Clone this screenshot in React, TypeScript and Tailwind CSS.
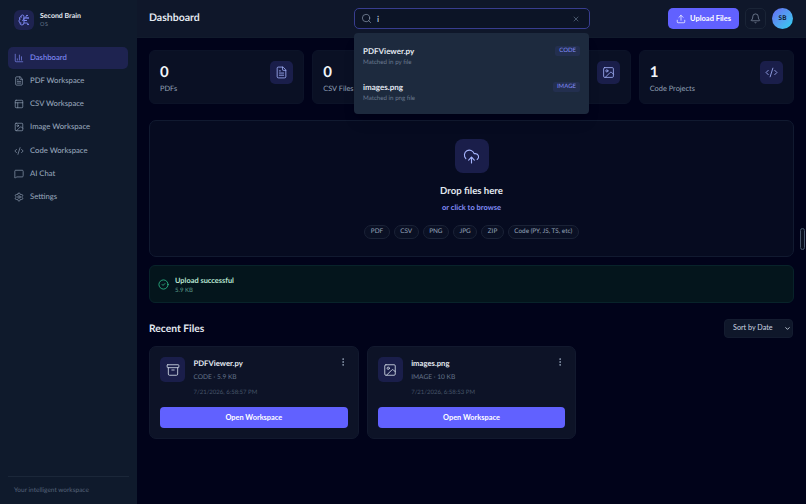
import React from "react";
import { ChartColumn, FileText, PanelsTopLeft, Image, CodeXml, MessageSquare, Settings, Search, X, Upload, Bell, CloudUpload, Archive, EllipsisVertical, CircleCheck, BrainCircuit, ChevronDown } from "lucide-react";

const nav = [
  { label: "Dashboard", Icon: ChartColumn, active: true },
  { label: "PDF Workspace", Icon: FileText },
  { label: "CSV Workspace", Icon: PanelsTopLeft },
  { label: "Image Workspace", Icon: Image },
  { label: "Code Workspace", Icon: CodeXml },
  { label: "AI Chat", Icon: MessageSquare },
  { label: "Settings", Icon: Settings },
];

const stats = [
  { n: "0", label: "PDFs", Icon: FileText },
  { n: "0", label: "CSV Files", Icon: PanelsTopLeft },
  { n: "1", label: "Images", Icon: Image },
  { n: "1", label: "Code Projects", Icon: CodeXml },
];

const chips = ["PDF", "CSV", "PNG", "JPG", "ZIP", "Code (PY, JS, TS, etc)"];

const files = [
  { name: "PDFViewer.py", meta: "CODE · 5.9 KB", date: "7/21/2026, 6:58:57 PM", Icon: Archive },
  { name: "images.png", meta: "IMAGE · 10 KB", date: "7/21/2026, 6:58:53 PM", Icon: Image },
];

const results = [
  { name: "PDFViewer.py", sub: "Matched in py file", tag: "CODE" },
  { name: "images.png", sub: "Matched in png file", tag: "IMAGE" },
];

export default function App() {
  return (
    <div className="relative flex h-[504px] w-[806px] overflow-hidden bg-[#01031a] text-white font-['Lato','Roboto',sans-serif] [text-rendering:geometricPrecision]">
      <aside className="flex w-[137px] shrink-0 flex-col bg-[#0f1a2c]">
        <div className="flex h-[38px] items-center gap-[6px] px-[14px] pt-[2px]">
          <div className="flex h-[20px] w-[20px] items-center justify-center rounded-[6px] bg-[#1e2350]">
            <BrainCircuit size={12} strokeWidth={1.8} className="text-[#818cf8]" />
          </div>
          <div className="flex flex-col">
            <span className="text-[7px] leading-[10px] font-bold text-[#e2e8f0]">Second Brain</span>
            <span className="text-[5.5px] leading-[9px] tracking-[0.5px] text-[#64748b]">OS</span>
          </div>
        </div>
        <nav className="mt-[8.5px] flex flex-col gap-[1.25px] pl-[8px] pr-[9px]">
          {nav.map(({ label, Icon, active }) => (
            <div key={label} className={`flex h-[22px] items-center gap-[6px] rounded-[5px] px-[6px] text-[7.7px] font-medium ${active ? "bg-[#1e2350] text-[#818cf8]" : "text-[#94a3b8]"}`}>
              <Icon size={10} strokeWidth={1.6} className="shrink-0" />
              <span>{label}</span>
            </div>
          ))}
        </nav>
        <div className="mx-[8px] mt-auto flex h-[28px] items-center border-t border-[#1b2739] px-[6px] text-[6.5px] text-[#566379]">
          Your intelligent workspace
        </div>
      </aside>

      <div className="flex min-w-0 flex-1 flex-col">
        <header className="flex h-[38px] shrink-0 items-center border-b border-[#111b2c] bg-[#0f172a] pl-[12px] pr-[13px]">
          <h1 className="w-[205px] pt-[1px] text-[10.5px] font-bold text-[#e2e8f0]">Dashboard</h1>
          <div className="flex h-[21px] w-[236px] items-center rounded-[5px] border border-[#383d8f] bg-[#0c1426] pl-[6px] pr-[9px]">
            <Search size={11} strokeWidth={1.4} className="text-[#94a3b8]" />
            <span className="ml-[5px] flex-1 pt-[1px] text-[8.5px] font-medium text-[#cbd5e1]">i</span>
            <X size={8} strokeWidth={2} className="text-[#64748b]" />
          </div>
          <div className="ml-auto flex items-center gap-[6px]">
            <button className="flex h-[21px] w-[71px] items-center justify-center gap-[4px] rounded-[5px] bg-[#6161ff] text-[7.5px] font-bold text-white">
              <Upload size={10} strokeWidth={1.7} />
              Upload Files
            </button>
            <div className="flex h-[21px] w-[21px] items-center justify-center rounded-[5px] border border-[#1a2436] bg-[#0f172a]">
              <Bell size={11} strokeWidth={1.4} className="text-[#94a3b8]" />
            </div>
            <div className="flex h-[21px] w-[21px] items-center justify-center rounded-full bg-gradient-to-br from-[#6366f1] to-[#22d3ee] text-[6.5px] font-bold text-[#0f172a]">SB</div>
          </div>
        </header>

        <main className="flex flex-1 flex-col px-[12px] pt-[12px]">
          <section className="grid grid-cols-4 gap-[8px]">
            {stats.map(({ n, label, Icon }) => (
              <div key={label} className="flex h-[54px] items-start justify-between rounded-[6px] border border-[#0c1328] bg-[#0a1024] px-[10px] pt-[10px]">
                <div className="pt-[1px]">
                  <div className="text-[15px] leading-[21px] font-bold text-[#f1f5f9]">{n}</div>
                  <div className="text-[7.4px] leading-[12px] text-[#94a3b8]">{label}</div>
                </div>
                <div className="flex h-[23px] w-[23px] items-center justify-center rounded-[5px] bg-[#1a1e4a]">
                  <Icon size={13} strokeWidth={1.5} className="text-[#a5b4fc]" />
                </div>
              </div>
            ))}
          </section>

          <section className="mt-[16px] flex h-[137px] flex-col items-center rounded-[7px] border border-[#111a30] bg-[#060b20] pt-[18px]">
            <div className="flex h-[34px] w-[34px] items-center justify-center rounded-[8px] bg-[#1a1e4a]">
              <CloudUpload size={17} strokeWidth={1.6} className="text-[#a5b4fc]" />
            </div>
            <div className="mt-[12px] text-[9.6px] leading-[14px] font-bold text-[#e2e8f0]">Drop files here</div>
            <div className="mt-[3px] text-[7.5px] leading-[11px] font-bold text-[#818cf8]">or click to browse</div>
            <div className="mt-[12px] flex gap-[4px]">
              {chips.map((c) => (
                <span key={c} className="flex h-[14px] items-center rounded-full border border-[#1a2236] bg-[#0a1024] px-[5.5px] text-[6.4px] text-[#94a3b8]">{c}</span>
              ))}
            </div>
          </section>

          <section className="mt-[8px] flex h-[38px] items-center gap-[6px] rounded-[6px] border border-[#08232a] bg-[#04151c] px-[8px]">
            <CircleCheck size={11} strokeWidth={1.6} className="text-[#34d399]" />
            <div className="pt-[2px]">
              <div className="text-[7.4px] leading-[11px] font-bold text-[#b8e6d3]">Upload successful</div>
              <div className="text-[6px] leading-[10px] text-[#5a9a8a]">5.9 KB</div>
            </div>
          </section>

          <div className="mt-[16px] flex h-[19px] items-center justify-between pr-[1px]">
            <h2 className="pt-[2px] text-[10.3px] font-bold text-[#e2e8f0]">Recent Files</h2>
            <div className="relative">
              <select defaultValue="date" className="block h-[19px] w-[69px] appearance-none rounded-[4px] border border-[#141c30] bg-[#0f172a] pl-[8px] text-[7.2px] text-[#cbd5e1]">
                <option value="date">Sort by Date</option>
              </select>
              <ChevronDown size={7} strokeWidth={3} className="absolute right-[2px] top-[6px] text-[#cbd5e1]" />
            </div>
          </div>

          <section className="mt-[8px] grid grid-cols-3 gap-[8px]">
            {files.map(({ name, meta, date, Icon }) => (
              <div key={name} className="flex h-[93px] flex-col rounded-[7px] border border-[#12192e] bg-[#0d1327] px-[10px] pt-[10px]">
                <div className="flex items-start">
                  <div className="flex h-[25px] w-[25px] shrink-0 items-center justify-center rounded-[5px] bg-[#1a1e4a]">
                    <Icon size={14} strokeWidth={1.5} className="text-[#cbd5e1]" />
                  </div>
                  <div className="ml-[8.5px] flex-1">
                    <div className="text-[7.7px] leading-[12px] font-bold text-[#e2e8f0]">{name}</div>
                    <div className="mt-[3px] text-[6.6px] leading-[11px] text-[#64748b]">{meta}</div>
                    <div className="mt-[5px] text-[6px] leading-[10px] text-[#475569]">{date}</div>
                  </div>
                  <EllipsisVertical size={10} strokeWidth={2} className="text-[#94a3b8]" />
                </div>
                <button className="mt-auto mb-[10px] h-[21px] rounded-[4px] bg-[#6161ff] text-[7.4px] font-bold text-white">Open Workspace</button>
              </div>
            ))}
          </section>
        </main>
      </div>

      <div className="absolute left-[354px] top-[33px] flex w-[235px] flex-col gap-[6px] rounded-[4px] bg-[#1d2a3e] px-[9px] pt-[13px] pb-[2px] shadow-lg">
        {results.map(({ name, sub, tag }) => (
          <div key={name} className="flex h-[30px] items-start justify-between">
            <div>
              <div className="text-[8px] leading-[10px] font-bold text-[#e2e8f0]">{name}</div>
              <div className="mt-[2px] text-[6.2px] leading-[10px] text-[#6b7a90]">{sub}</div>
            </div>
            <span className="rounded-[2px] bg-[#232f4f] px-[4px] py-[1px] text-[6px] leading-[8px] text-[#818cf8]">{tag}</span>
          </div>
        ))}
      </div>

      <div className="absolute left-[800px] top-[228px] h-[22px] w-[5px] rounded-full border border-[#475569] bg-[#0a0f20]" />
    </div>
  );
}
